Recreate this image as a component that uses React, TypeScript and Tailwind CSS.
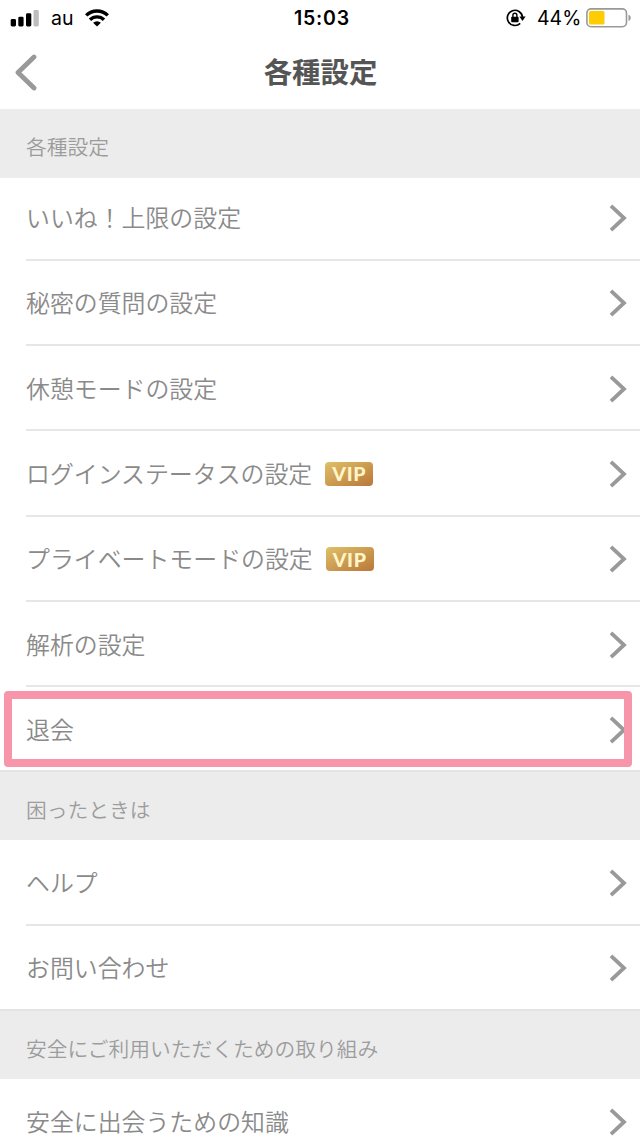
interface SettingItem {
  label: string;
  vip?: boolean;
  highlighted?: boolean;
}

interface SettingSection {
  title: string;
  items: SettingItem[];
  headerClass: string;
  firstRowClass: string;
}

const sections: SettingSection[] = [
  {
    title: "各種設定",
    headerClass: "h-[68px] pt-[6px]",
    firstRowClass: "h-[82.7px] pb-[2px]",
    items: [
      { label: "いいね！上限の設定" },
      { label: "秘密の質問の設定" },
      { label: "休憩モードの設定" },
      { label: "ログインステータスの設定", vip: true },
      { label: "プライベートモードの設定", vip: true },
      { label: "解析の設定" },
      { label: "退会", highlighted: true },
    ],
  },
  {
    title: "困ったときは",
    headerClass: "h-[68px] pt-[6px]",
    firstRowClass: "h-[85.3px]",
    items: [{ label: "ヘルプ" }, { label: "お問い合わせ" }],
  },
  {
    title: "安全にご利用いただくための取り組み",
    headerClass: "h-[68.4px] pt-[7px]",
    firstRowClass: "h-[85.3px]",
    items: [{ label: "安全に出会うための知識" }],
  },
];

function SignalIcon() {
  return (
    <svg width="30" height="20" viewBox="0 0 30 20">
      <rect x="0.7" y="11" width="5.3" height="7.5" rx="1.4" />
      <rect x="8.3" y="8.7" width="5.3" height="9.8" rx="1.4" />
      <rect x="16" y="5.2" width="5.3" height="13.3" rx="1.4" />
      <rect x="23.5" y="2" width="5.3" height="16.5" rx="1.4" fill="#bdbdbd" />
    </svg>
  );
}

function WifiIcon() {
  return (
    <svg width="24" height="18" viewBox="0 0 24 18" fill="none" stroke="#000" strokeWidth="3.4">
      <path d="M1.2 6.4a15.4 15.4 0 0 1 21.6 0" />
      <path d="M5 10.8a9.9 9.9 0 0 1 14 0" />
      <path d="M12 17.6l-3.9-3.8a5.5 5.5 0 0 1 7.8 0z" fill="#000" stroke="none" />
    </svg>
  );
}

function RotationLockIcon() {
  return (
    <svg width="20" height="18" viewBox="0 0 20 18" fill="none" stroke="#000">
      <path d="M14.2 14.4A7.6 7.6 0 1 1 16.5 8" strokeWidth="1.7" />
      <path d="M13.4 7.6h6.2l-3.1 4.3z" fill="#000" stroke="none" />
      <rect x="5.2" y="7.8" width="7.4" height="5.4" rx="0.8" fill="#000" stroke="none" />
      <path d="M6.9 8V6.3a2 2 0 0 1 4 0V8" strokeWidth="1.4" />
    </svg>
  );
}

function BatteryIcon() {
  return (
    <svg width="46" height="20" viewBox="0 0 46 20">
      <rect x="0.9" y="0.9" width="39.6" height="17.8" rx="4.2" fill="#fff" stroke="#999" strokeWidth="1.6" />
      <rect x="3" y="3" width="15.5" height="13.6" rx="1.6" fill="#ffcc00" />
      <path d="M42.5 6.8c3 .8 3 5.4 0 6.2z" fill="#999" />
    </svg>
  );
}

function StatusBar() {
  return (
    <div className="grid h-9 shrink-0 grid-cols-3 items-center font-['Inter','Liberation_Sans',sans-serif] text-[19.5px] text-black">
      <div className="flex items-center pl-[10px]">
        <SignalIcon />
        <span className="ml-[11px] w-[34px] pt-px">au</span>
        <WifiIcon />
      </div>
      <div className="pt-0.5 pl-1 text-center text-[19.5px] font-semibold tracking-[0.8px]">15:03</div>
      <div className="flex items-center justify-end pr-2">
        <RotationLockIcon />
        <span className="ml-[11px] w-[49px] pt-0.5 whitespace-nowrap text-[19.5px]">44%</span>
        <BatteryIcon />
      </div>
    </div>
  );
}

function VipBadge() {
  return (
    <span className="ml-[13px] flex h-6 w-12 items-center justify-center rounded bg-linear-to-br from-[#dfc068] to-[#b9773a] font-['Lato',sans-serif] text-[19.5px] font-black tracking-[0.7px] text-[#fff5c8]">
      VIP
    </span>
  );
}

function SettingRow({
  item,
  heightClass,
  last,
}: {
  item: SettingItem;
  heightClass: string;
  last: boolean;
}) {
  return (
    <div className={`relative shrink-0 ${last ? "" : "pl-[26px]"}`}>
      <div
        className={`flex items-center border-b-2 pt-[2px] pr-[13px] ${heightClass} ${
          last ? "border-[#e4e4e4] pl-[26px]" : "border-[#e6e6e6]"
        }`}
      >
        <span className="-mt-0.5 whitespace-nowrap text-[23.9px] font-[350] text-[#8a8a8a]">{item.label}</span>
        {item.vip && <VipBadge />}
        <svg className="ml-auto" width="18" height="28" viewBox="0 0 18 28" fill="none">
          <path d="M2 1.8L15 14L2 26.2" stroke="#999" strokeWidth="3.8" />
        </svg>
      </div>
      {item.highlighted && (
        <div className="absolute top-1 right-2 bottom-[5px] left-1 rounded-[4px] border-8 border-[#f796aa]" />
      )}
    </div>
  );
}

export default function App() {
  return (
    <div className="flex h-[1138px] w-[640px] flex-col overflow-hidden bg-white font-['Noto_Sans_CJK_JP',sans-serif]">
      <StatusBar />
      <header className="grid h-[74px] shrink-0 grid-cols-[64px_1fr_64px] items-center border-b border-[#eee]">
        <svg className="ml-[14px]" width="24" height="38" viewBox="0 0 24 38" fill="none">
          <path
            d="M20 3L4 18.5L20 34"
            stroke="#999"
            strokeWidth="4.8"
            strokeLinecap="round"
            strokeLinejoin="round"
          />
        </svg>
        <h1 className="-mt-0.5 pl-px text-center text-[28.4px] font-bold text-[#555]">各種設定</h1>
      </header>
      {sections.map((section) => (
        <section key={section.title} className="shrink-0">
          <h2
            className={`flex items-center bg-[#ececec] pl-[26px] text-[20.75px] font-[350] text-[#9c9c9c] ${section.headerClass}`}
          >
            {section.title}
          </h2>
          {section.items.map((item, index) => (
            <SettingRow
              key={item.label}
              item={item}
              heightClass={index === 0 ? section.firstRowClass : "h-[85.3px]"}
              last={index === section.items.length - 1}
            />
          ))}
        </section>
      ))}
    </div>
  );
}
